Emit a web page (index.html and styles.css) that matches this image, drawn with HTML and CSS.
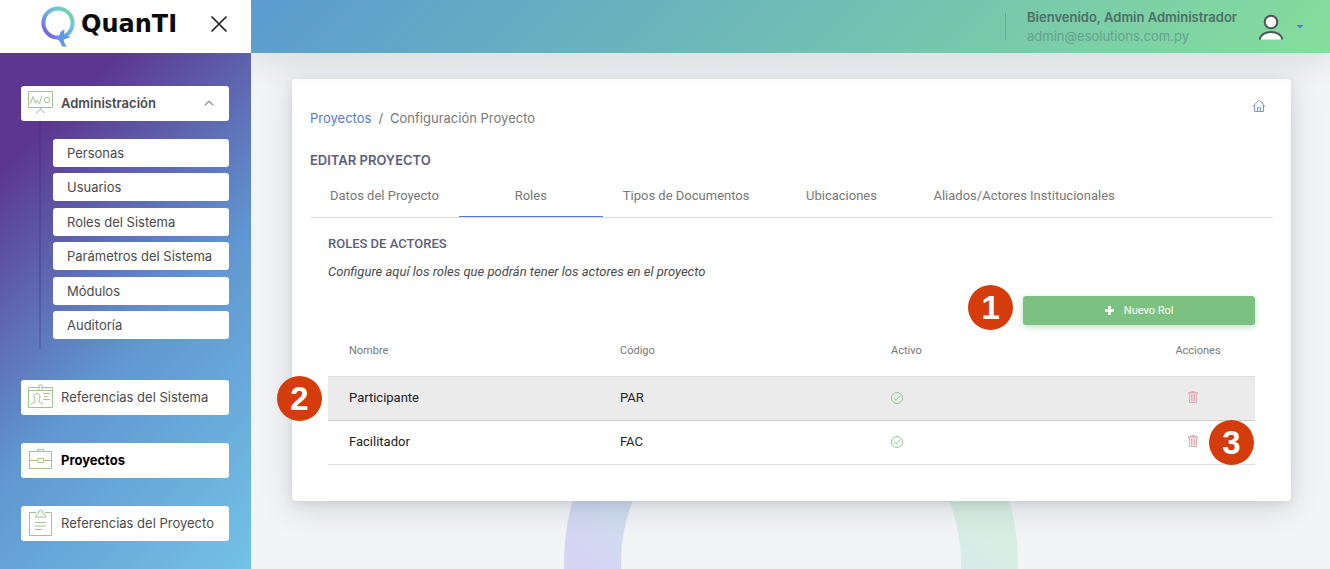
FILE: index.html
```html
<!DOCTYPE html>
<html lang="es">
<head>
<meta charset="utf-8">
<title>QuanTI - Configuración Proyecto</title>
<link rel="stylesheet" href="styles.css">
</head>
<body>
<div class="app">
  <aside class="sidebar">
    <div class="brand">
      <svg class="brand-mark" width="36" height="41" viewBox="0 0 36 41" aria-hidden="true">
        <defs>
          <linearGradient id="mark" x1="0" y1="1" x2="1" y2="0">
            <stop offset="0.1" stop-color="#7a5fe0"/>
            <stop offset="0.35" stop-color="#6c9ce4"/>
            <stop offset="0.65" stop-color="#68c2de"/>
            <stop offset="0.95" stop-color="#7fd89c"/>
          </linearGradient>
        </defs>
        <circle cx="18" cy="17" r="14.600" fill="none" stroke="url(#mark)" stroke-width="4"/>
        <path d="M24.500 23.500Q19.500 25 19.500 29L16.500 32.500Q20.500 35 22 40.500H27Q23.500 37 23.800 33.500L31 31Q26.500 30 24 28Z" fill="#6197e4"/>
      </svg>
      <span class="brand-name">QuanTI</span>
      <button class="close" type="button" aria-label="Cerrar menú">
        <svg width="18" height="18" viewBox="0 0 18 18"><path d="M1.500 1.500L16.500 16.500M16.500 1.500L1.500 16.500" fill="none" stroke="#222" stroke-width="1.700"/></svg>
      </button>
    </div>
    <nav class="menu">
      <a class="item item-open" href="#">
        <svg class="item-icon" width="26" height="26" viewBox="0 0 26 26"><path d="M.5 1.500h24v16H.5zM12.500 17.500v2.500M12.500 19.500l-4.500 3.500M12.500 19.500l4.500 3.500M2.500 13.500L5 6.500l2.500 6.500 1.500-3 2.500 3.500L14 5.500"/><circle cx="19" cy="10" r="2.600"/></svg>
        <span>Administración</span>
        <svg class="caret" width="10" height="6" viewBox="0 0 10 6"><path d="M.8 5.300L5 1.200l4.200 4.100" fill="none" stroke="#999" stroke-width="1.300"/></svg>
      </a>
      <div class="submenu">
        <a class="subitem" href="#">Personas</a>
        <a class="subitem" href="#">Usuarios</a>
        <a class="subitem" href="#">Roles del Sistema</a>
        <a class="subitem" href="#">Parámetros del Sistema</a>
        <a class="subitem" href="#">Módulos</a>
        <a class="subitem" href="#">Auditoría</a>
      </div>
      <div class="items">
        <a class="item" href="#">
          <svg class="item-icon" width="26" height="26" viewBox="0 0 26 26"><path d="M11 3.500H.5v20h24v-20H14M.5 6.500H11M14 6.500h10.500M11 1h3v5.500h-3zM15 9.500h7M16 12.500h3.500M15 15.500h7M3 20l4-2v-2C5.500 14 5.500 9.500 9 9.500s3.500 4.500 2 6.500v2l4 2"/></svg>
          <span>Referencias del Sistema</span>
        </a>
        <a class="item item-current" href="#">
          <svg class="item-icon" width="26" height="26" viewBox="0 0 26 26"><path d="M1.500 4.500h22v17h-22zM9.500 4.500v-2h6v2M1.500 13.500H10M15.500 13.500h8M10 11.500h5.500v4H10z"/></svg>
          <span>Proyectos</span>
        </a>
        <a class="item" href="#">
          <svg class="item-icon" width="26" height="28" viewBox="0 0 26 28"><path d="M8.500 3.500h-7v23h22v-23H17M7.500 8q0-2.500 3-3.500 0-3.500 2.200-3.500T15 4.500q3 1 3 3.500zM7 13.500h11M7 17h11M7 20.500h7"/></svg>
          <span>Referencias del Proyecto</span>
        </a>
      </div>
    </nav>
  </aside>

  <div class="page">
    <header class="topbar">
      <div class="user">
        <strong class="user-name">Bienvenido, Admin Administrador</strong>
        <span class="user-mail">admin@esolutions.com.py</span>
      </div>
      <button class="account" type="button" aria-label="Cuenta">
        <svg width="24" height="26" viewBox="0 0 24 26"><path d="M.7 25.500C2 15.500 22 15.500 23.300 25.500z" fill="#fff"/><path d="M.7 25.500C2 15.500 22 15.500 23.300 25.500" fill="none" stroke="#4b5558" stroke-width="2"/><circle cx="12" cy="8" r="6.300" fill="#fff" stroke="#4b5558" stroke-width="2"/></svg>
        <svg width="8" height="4" viewBox="0 0 8 4"><path d="M.5 0h7L4 3.500z" fill="#5578d8"/></svg>
      </button>
    </header>

    <main class="main">
      <svg class="ring" width="454" height="454" viewBox="0 0 454 454" aria-hidden="true">
        <defs>
          <linearGradient id="ring" x1="0" y1="1" x2="1" y2="0">
            <stop offset="0.24" stop-color="#d6d4f3"/>
            <stop offset="0.33" stop-color="#d0dcf1"/>
            <stop offset="0.66" stop-color="#d3e9ef"/>
            <stop offset="0.78" stop-color="#d7efe3"/>
          </linearGradient>
        </defs>
        <circle cx="227" cy="227" r="198.500" fill="none" stroke="url(#ring)" stroke-width="57"/>
      </svg>

      <section class="card">
        <div class="card-top">
          <nav class="crumbs" aria-label="Ruta">
            <a class="crumb-link" href="#">Proyectos</a><span class="crumb-sep">/</span><span>Configuración Proyecto</span>
          </nav>
          <a class="home" href="#" aria-label="Inicio">
            <svg width="14" height="14" viewBox="0 0 14 14"><path d="M.8 7.500L7 1.200l6.200 6.300M2.500 6v6.500h9V6M5.500 12.500V8.700h3v3.800M10.700 4.500V2.500" fill="none" stroke="#7f94e0"/></svg>
          </a>
        </div>
        <h1 class="title">EDITAR PROYECTO</h1>
        <div class="tabs" role="tablist">
          <button class="tab" type="button" role="tab">Datos del Proyecto</button>
          <button class="tab tab-active" type="button" role="tab" aria-selected="true">Roles</button>
          <button class="tab" type="button" role="tab">Tipos de Documentos</button>
          <button class="tab" type="button" role="tab">Ubicaciones</button>
          <button class="tab" type="button" role="tab">Aliados/Actores Institucionales</button>
        </div>
        <div class="panel">
          <h2 class="subtitle">ROLES DE ACTORES</h2>
          <p class="hint">Configure aquí los roles que podrán tener los actores en el proyecto</p>
          <div class="actions">
            <span class="badge badge-new">1</span>
            <button class="new-role" type="button">
              <svg width="9" height="9" viewBox="0 0 9 9"><path d="M4.500 0v9M0 4.500h9" stroke="#fff" stroke-width="2.600"/></svg>
              <span>Nuevo Rol</span>
            </button>
          </div>
          <table class="roles">
            <colgroup><col class="col-data"><col class="col-data"><col class="col-data"><col></colgroup>
            <thead>
              <tr><th>Nombre</th><th>Código</th><th>Activo</th><th class="cell-action">Acciones</th></tr>
            </thead>
            <tbody>
              <tr class="row-hover">
                <td class="cell-anchor"><span class="badge badge-row">2</span>Participante</td>
                <td>PAR</td>
                <td><svg class="check" width="12" height="12" viewBox="0 0 12 12"><circle cx="6" cy="6" r="5.500"/><path d="M3 6.300l2 1.900 4-4.600"/></svg></td>
                <td class="cell-action"><button class="trash" type="button" aria-label="Eliminar Participante"><svg width="10" height="12" viewBox="0 0 10 12"><path d="M.5 1.500h9v1.500h-9zM3.500 1.500v-1h3v1M1.500 3v8.500h7V3M3.500 4v6.500M5 4v6.500M6.500 4v6.500"/></svg></button></td>
              </tr>
              <tr>
                <td>Facilitador</td>
                <td>FAC</td>
                <td><svg class="check" width="12" height="12" viewBox="0 0 12 12"><circle cx="6" cy="6" r="5.500"/><path d="M3 6.300l2 1.900 4-4.600"/></svg></td>
                <td class="cell-action cell-anchor"><button class="trash" type="button" aria-label="Eliminar Facilitador"><svg width="10" height="12" viewBox="0 0 10 12"><path d="M.5 1.500h9v1.500h-9zM3.500 1.500v-1h3v1M1.500 3v8.500h7V3M3.500 4v6.500M5 4v6.500M6.500 4v6.500"/></svg></button><span class="badge badge-delete">3</span></td>
              </tr>
            </tbody>
          </table>
        </div>
      </section>
    </main>
  </div>
</div>
</body>
</html>
```

FILE: styles.css
```css
* { box-sizing: border-box; }

body {
  margin: 0;
  font-family: Inter, "Liberation Sans", sans-serif;
  font-size: 13px;
  line-height: 20px;
  color: #4a4a4a;
  background: #f2f4f6;
}

a { color: inherit; text-decoration: none; }
button { font: inherit; color: inherit; border: 0; padding: 0; background: none; cursor: pointer; }
svg { display: block; flex: none; }

.app { display: flex; min-height: 100vh; }

/* Sidebar */
.sidebar {
  position: relative;
  z-index: 2;
  display: flex;
  flex-direction: column;
  flex: none;
  width: 251px;
}

.brand {
  display: flex;
  align-items: center;
  height: 53px;
  padding: 0 23px 0 40px;
  background: #fff;
}

.brand-name {
  margin: -6px 0 0 5px;
  font-family: "DejaVu Sans", sans-serif;
  font-size: 24px;
  font-weight: 700;
  line-height: 32px;
  color: #0b0b0b;
}

.close { margin-left: auto; margin-top: -6px; }

.menu {
  flex: 1;
  padding: 33px 22px 28px 21px;
  background: linear-gradient(135deg, #5c368f 15%, #6096d0 55%, #73c2e7 100%);
}

.item {
  display: flex;
  align-items: center;
  gap: 7px;
  height: 35px;
  padding: 0 15px 2px 7px;
  border-radius: 3px;
  background: #fff;
}

.item-open { font-weight: 600; }
.item-current { font-weight: 700; color: #000; }
.item-icon { fill: none; stroke: #a3c191; }
.caret { margin-left: auto; }

.submenu {
  display: flex;
  flex-direction: column;
  justify-content: space-between;
  min-height: 228px;
  margin-left: 18px;
  padding: 18px 0 10px 12px;
  border-left: 2px solid rgba(60, 50, 120, 0.3);
}

.subitem {
  padding: 4px 14px;
  border-radius: 3px;
  background: #fff;
}

.items { display: grid; gap: 28px; padding-top: 31px; }

/* Page */
.page { display: flex; flex: 1; flex-direction: column; min-width: 0; }

.topbar {
  position: relative;
  z-index: 1;
  display: flex;
  justify-content: flex-end;
  align-items: center;
  height: 53px;
  padding-right: 26px;
  background: linear-gradient(135deg, #5b9bd0, #85de9b);
  box-shadow: 0 8px 32px rgba(60, 70, 90, 0.14);
}

.user {
  display: flex;
  flex-direction: column;
  height: 27px;
  justify-content: center;
  padding-left: 21px;
  border-left: 1px solid #64ab95;
  line-height: 19px;
}

.user-name { font-weight: 600; color: #4e6e68; }
.user-mail { color: #64a18e; }

.account { display: flex; align-items: center; gap: 13px; margin-left: 22px; }

.main {
  position: relative;
  flex: 1;
  padding: 26px 39px 68px 41px;
  overflow: hidden;
}

.ring {
  position: absolute;
  top: 283px;
  left: 50%;
  transform: translateX(-50%);
}

.card {
  position: relative;
  padding: 18px;
  border-radius: 4px;
  background: #fff;
  box-shadow: 0 6px 32px rgba(60, 70, 90, 0.18), 0 3px 8px rgba(60, 70, 90, 0.1);
}

.card-top { display: flex; justify-content: space-between; padding-right: 7px; color: #777; }
.crumbs { padding-top: 11px; }
.crumb-link { color: #5578d8; }
.crumb-sep { padding: 0 7px; }
.home { padding-top: 2px; }

.title {
  margin: 22px 0 6px;
  font-size: 13px;
  font-weight: 600;
  line-height: 20px;
  color: #5a607b;
}

.tabs {
  display: flex;
  border-bottom: 1px solid #dedede;
  font-family: Roboto, sans-serif;
  color: #777;
}

.tab {
  min-width: 144px;
  height: 41px;
  padding: 0 20px;
  border-bottom: 1px solid transparent;
}

.tab-active { border-bottom-color: #5578d8; }

.panel { padding: 16px 18px 18px; font-family: Roboto, sans-serif; }

.subtitle {
  margin: 0;
  font-size: 13px;
  font-weight: 500;
  line-height: 20px;
  color: #5a607b;
}

.hint { margin: 8px 0 14px; font-style: italic; }

.actions { position: relative; width: 25%; margin-left: auto; }

.new-role {
  display: flex;
  align-items: center;
  justify-content: center;
  gap: 10px;
  width: 100%;
  height: 29px;
  border-radius: 3px;
  background: #7cc182;
  box-shadow: 0 2px 6px rgba(124, 193, 130, 0.5);
  font-size: 11px;
  color: #fff;
}

.roles {
  width: 100%;
  margin-top: 7px;
  border-collapse: collapse;
  table-layout: fixed;
  color: #222;
}

.col-data { width: 271px; }

.roles th,
.roles td {
  height: 44px;
  padding: 0 21px;
  text-align: left;
  border-bottom: 1px solid #dedede;
}

.roles th { padding-bottom: 6px; font-size: 11px; font-weight: 400; color: #777; }
.roles .cell-action { padding: 2px 10px 0 0; text-align: center; }
.roles th.cell-action { padding: 0 0 6px; }
.row-hover { background: #ebebeb; }
.roles .row-hover td { border-bottom-color: #ccc; }
.cell-anchor { position: relative; }
.check { fill: none; stroke: #8ccb92; }
.trash svg { fill: none; stroke: #e5aab5; }

/* Numbered callouts */
.badge {
  position: absolute;
  width: 45px;
  height: 45px;
  border-radius: 50%;
  background: #d53c0b;
  font: 700 33px/45px "Liberation Sans", Arial, sans-serif;
  text-align: center;
  color: #fff;
}

.badge-new { right: calc(100% + 10px); top: -11px; }
.badge-row { left: -51px; top: -1px; }
.badge-delete { right: 1px; top: -1px; }
```
